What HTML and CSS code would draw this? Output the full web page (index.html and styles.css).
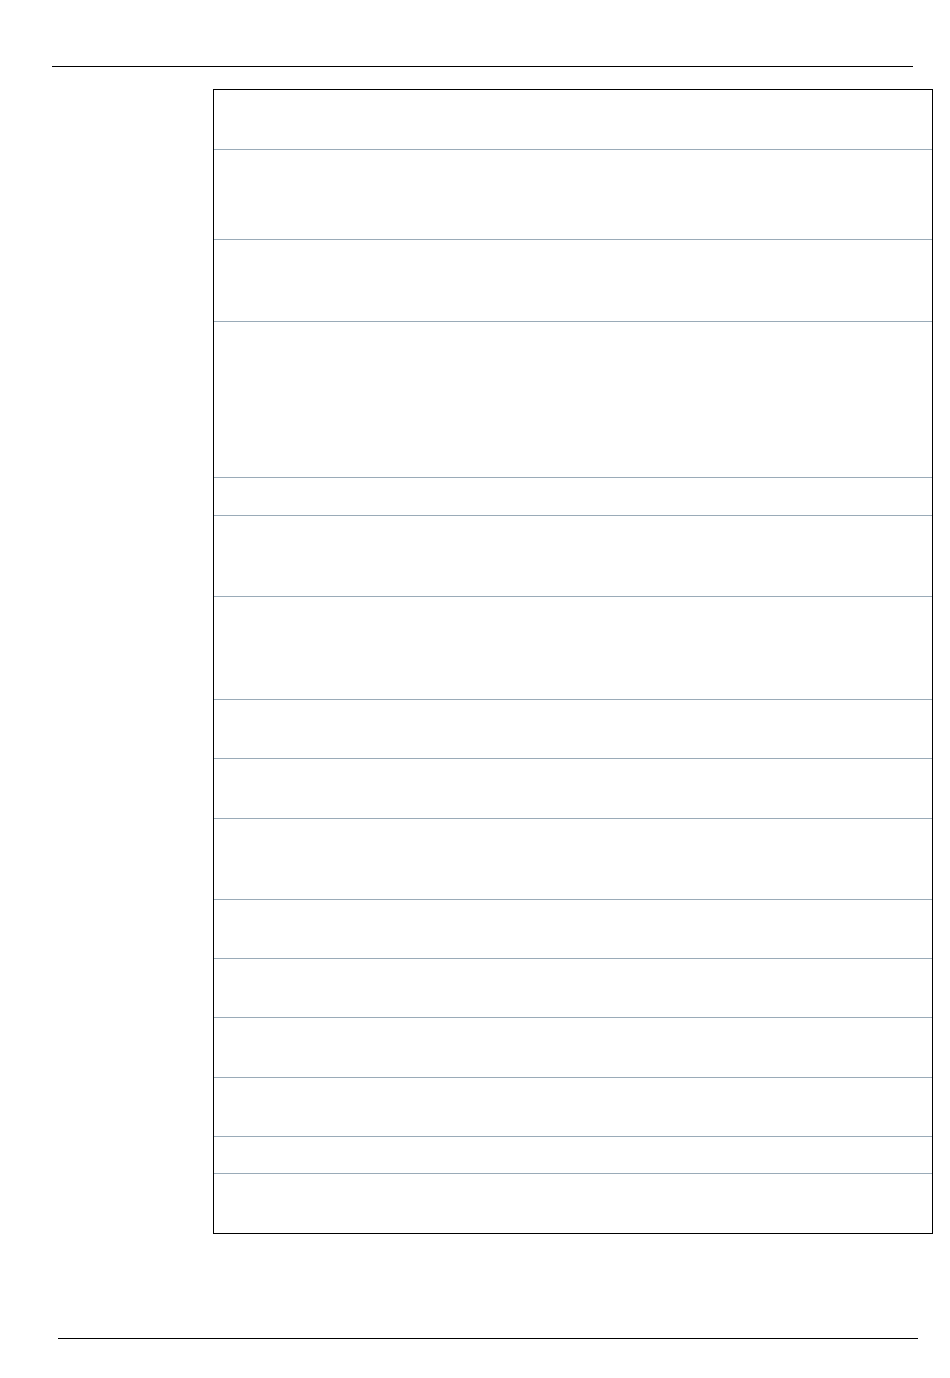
FILE: index.html
```html
<!DOCTYPE html>
<html lang="en">
<head>
    <meta charset="UTF-8">
    <meta name="viewport" content="width=device-width, initial-scale=1.0">
    <title>Document Page</title>
    <link rel="stylesheet" href="styles.css">
</head>
<body>
    <div class="page">
        <div class="header-rule"></div>
        <div class="sheet">
            <div class="row r59"></div>
            <div class="row r90"></div>
            <div class="row r82"></div>
            <div class="row r156"></div>
            <div class="row r38"></div>
            <div class="row r81"></div>
            <div class="row r103"></div>
            <div class="row r59"></div>
            <div class="row r60"></div>
            <div class="row r81"></div>
            <div class="row r59"></div>
            <div class="row r59"></div>
            <div class="row r60"></div>
            <div class="row r59"></div>
            <div class="row r37"></div>
            <div class="row r60"></div>
        </div>
        <div class="footer-rule"></div>
    </div>
</body>
</html>
```
FILE: styles.css
```css
:root {
    --rule: #000;
    --row-line: #9aabb8;
}
body {
    margin: 0;
    background: #fff;
    font-family: 'Liberation Sans', sans-serif;
}
.page {
    width: 950px;
    height: 1378px;
    padding-top: 66px;
    box-sizing: border-box;
}
.header-rule {
    margin-left: 52px;
    width: 861px;
    border-top: 1px solid var(--rule);
}
.sheet {
    margin-top: 22px;
    margin-left: 213px;
    width: 720px;
    border: 1px solid var(--rule);
    box-sizing: border-box;
    display: flex;
    flex-direction: column;
}
.row {
    box-sizing: border-box;
    border-top: 1px solid var(--row-line);
}
.row:first-child {
    border-top: none;
}
.r37 { height: 37px; }
.r38 { height: 38px; }
.r59 { height: 59px; }
.r60 { height: 60px; }
.r81 { height: 81px; }
.r82 { height: 82px; }
.r90 { height: 90px; }
.r103 { height: 103px; }
.r156 { height: 156px; }
.footer-rule {
    margin-top: 104px;
    margin-left: 58px;
    width: 860px;
    border-top: 1px solid var(--rule);
}
```
